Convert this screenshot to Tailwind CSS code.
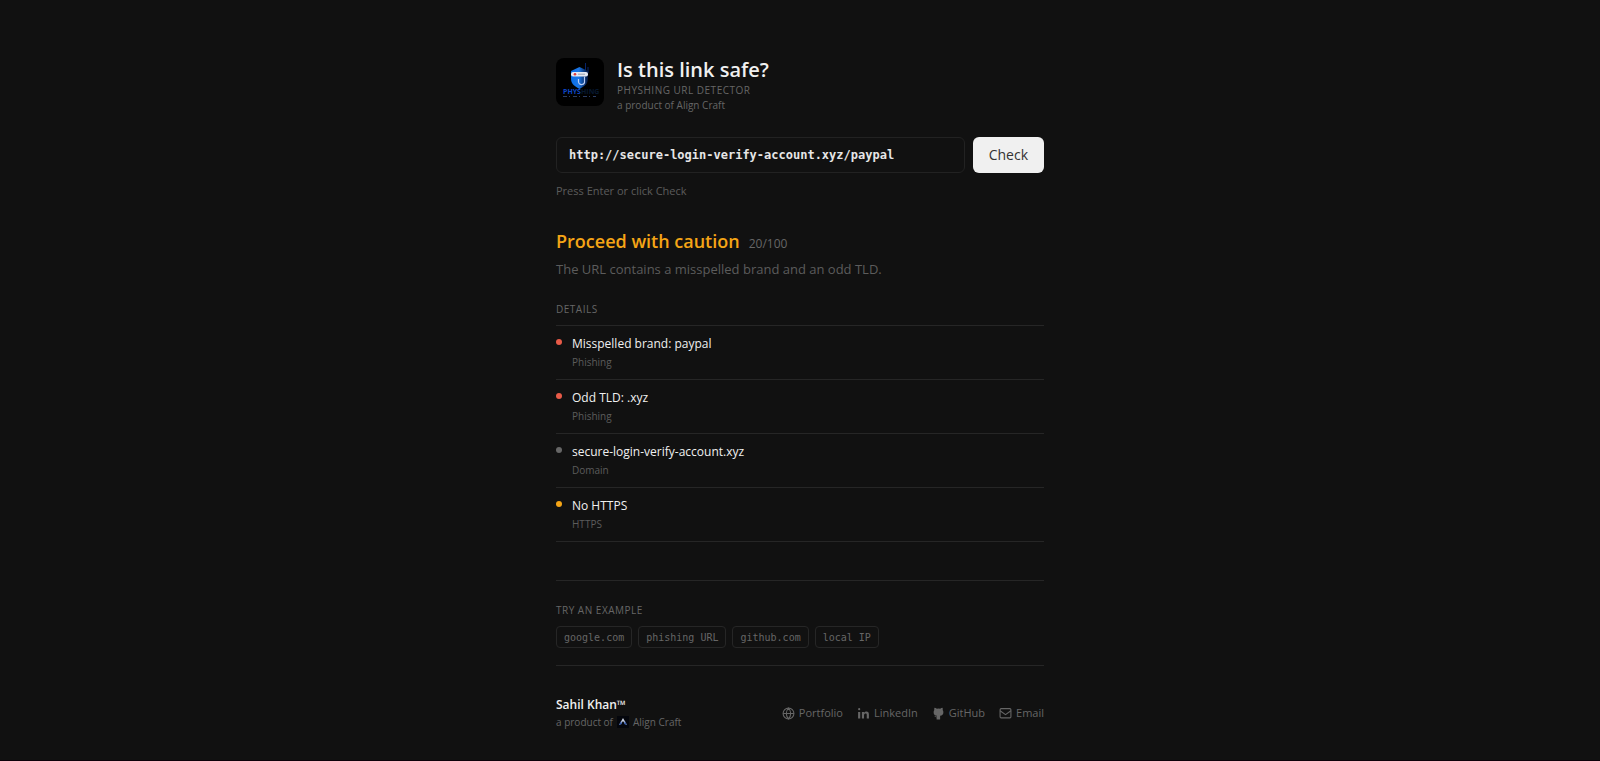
<!DOCTYPE html>
<html lang="en">
<head>
<meta charset="utf-8">
<meta name="viewport" content="width=device-width, initial-scale=1">
<title>Is this link safe?</title>
<script src="https://cdn.jsdelivr.net/npm/@tailwindcss/browser@4"></script>
</head>
<body class="min-h-screen border-b border-[#0c0009] bg-[#111111] font-['Open_Sans',sans-serif] text-[#666666]">
<main class="mx-auto max-w-[520px] px-4 pt-[58px]">
  <header class="flex items-start gap-[13px]">
    <svg class="size-12 shrink-0 rounded-lg" viewBox="0 0 48 48" role="img" aria-label="Physhing logo">
      <defs><linearGradient id="shield" x1="0" x2="1"><stop offset="0" stop-color="#0a6ee8"/><stop offset=".45" stop-color="#1b76e5"/><stop offset="1" stop-color="#041338"/></linearGradient></defs>
      <rect width="48" height="48" fill="#000"/>
      <path d="M23.500 9l8.500 4v8c0 5-4 7.500-8.500 10-4.500-2.500-8.500-5-8.500-10v-8z" fill="url(#shield)"/>
      <path d="M29.500 5v7M32 9v6" stroke="#06246a" stroke-width="1"/>
      <rect x="15" y="14" width="17" height="4.500" rx="2" fill="#e4e8f2"/>
      <circle cx="19" cy="16.200" r="1.300" fill="#e23b3b"/>
      <path d="M22 16.200h7" stroke="#9aa0ae"/>
      <path d="M28.500 18.500v4.500a3 3 0 0 1-6 1v-3" fill="none" stroke="#b9cdf5" stroke-width="1.200"/>
      <text x="7" y="36" font-family="Open Sans" font-size="7" font-weight="700" fill="#0b45c4">PHYS<tspan fill="#06182f">HING</tspan></text>
      <path d="M7 38.500h33" stroke="#2b3e66" stroke-dasharray="4 2 1 3"/>
    </svg>
    <div>
      <h1 class="text-[20px] leading-6 font-semibold text-[#f0f0f0]">Is this link safe?</h1>
      <p class="text-[10px] leading-4 tracking-wider">PHYSHING URL DETECTOR</p>
      <p class="text-[10px] leading-[14px]">a product of Align Craft</p>
    </div>
  </header>

  <form class="mt-[25px]" onsubmit="return false">
    <div class="flex gap-2">
      <input type="text" aria-label="URL to check" value="http://secure-login-verify-account.xyz/paypal" class="h-9 min-w-0 flex-1 rounded-md border border-[#222222] bg-[#111111] px-3 font-['DejaVu_Sans_Mono',monospace] text-[12px] font-bold text-[#e6e6e6] outline-none">
      <button type="submit" class="h-9 rounded-md bg-[#f0f0f0] px-4 pb-0.5 text-[14px] text-[#333333]">Check</button>
    </div>
    <p class="mt-[10px] text-[11px] leading-4 text-[#5c5c5c]">Press Enter or click Check</p>
  </form>

  <section class="mt-7">
    <div class="flex items-baseline gap-[9px]">
      <h2 class="text-[18px] leading-7 font-semibold text-[#f5a516]">Proceed with caution</h2>
      <span class="text-[12px] text-[#666666]">20/100</span>
    </div>
    <p class="mt-1 text-[13px] leading-5 text-[#5c5c5c]">The URL contains a misspelled brand and an odd TLD.</p>
    <h3 class="mt-[22px] text-[10px] leading-4 tracking-wider">DETAILS</h3>
    <ul class="mt-2 border-t border-[#262626]">
      <li class="flex h-[54px] gap-[10px] border-b border-[#262626] pt-2">
        <span class="mt-[5px] size-[6px] shrink-0 rounded-full bg-[#e85b48]"></span>
        <div><p class="text-[12px] leading-5 font-medium text-[#f0f0f0]">Misspelled brand: paypal</p><p class="text-[10px] leading-4 text-[#5c5c5c]">Phishing</p></div>
      </li>
      <li class="flex h-[54px] gap-[10px] border-b border-[#262626] pt-2">
        <span class="mt-[5px] size-[6px] shrink-0 rounded-full bg-[#e85b48]"></span>
        <div><p class="text-[12px] leading-5 font-medium text-[#f0f0f0]">Odd TLD: .xyz</p><p class="text-[10px] leading-4 text-[#5c5c5c]">Phishing</p></div>
      </li>
      <li class="flex h-[54px] gap-[10px] border-b border-[#262626] pt-2">
        <span class="mt-[5px] size-[6px] shrink-0 rounded-full bg-[#666666]"></span>
        <div><p class="text-[12px] leading-5 font-medium text-[#f0f0f0]">secure-login-verify-account.xyz</p><p class="text-[10px] leading-4 text-[#5c5c5c]">Domain</p></div>
      </li>
      <li class="flex h-[54px] gap-[10px] border-b border-[#262626] pt-2">
        <span class="mt-[5px] size-[6px] shrink-0 rounded-full bg-[#f5a516]"></span>
        <div><p class="text-[12px] leading-5 font-medium text-[#f0f0f0]">No HTTPS</p><p class="text-[10px] leading-4 text-[#5c5c5c]">HTTPS</p></div>
      </li>
    </ul>
  </section>

  <section class="mt-[38px] border-y border-[#262626] pt-[21px] pb-[17px]">
    <h3 class="text-[10px] leading-4 tracking-wider">TRY AN EXAMPLE</h3>
    <div class="mt-2 flex gap-[6px] font-['DejaVu_Sans_Mono',monospace] text-[10px]">
      <button type="button" class="h-[22px] rounded border border-[#262626] px-[7px]">google.com</button>
      <button type="button" class="h-[22px] rounded border border-[#262626] px-[7px]">phishing URL</button>
      <button type="button" class="h-[22px] rounded border border-[#262626] px-[7px]">github.com</button>
      <button type="button" class="h-[22px] rounded border border-[#262626] px-[7px]">local IP</button>
    </div>
  </section>

  <footer class="flex items-center justify-between pt-[30px] pb-7">
    <div>
      <p class="text-[12px] leading-[18px] font-semibold text-[#f0f0f0]">Sahil Khan™</p>
      <p class="flex items-center gap-1 text-[10px] leading-4">a product of
        <svg class="size-3" viewBox="0 0 12 12" aria-hidden="true"><rect width="12" height="12" fill="#04060c"/><path d="M6 2l4 7-2-1-2-3-2 3-2 1z" fill="#c9d0e0"/><path d="M2 9l2-4 1 3zM7 8l3 1-2-4z" fill="#3459a8"/></svg>
        Align Craft</p>
    </div>
    <nav aria-label="Links" class="flex gap-[14px] text-[11px] leading-4">
      <a href="#" class="flex items-center gap-1"><svg class="size-[13px]" viewBox="0 0 24 24" fill="none" stroke="currentColor" stroke-width="2" aria-hidden="true"><circle cx="12" cy="12" r="10"/><path d="M2 12h20M12 2c3 3 4 6 4 10s-1 7-4 10c-3-3-4-6-4-10s1-7 4-10z"/></svg>Portfolio</a>
      <a href="#" class="flex items-center gap-1"><svg class="size-[13px]" viewBox="0 0 24 24" fill="currentColor" aria-hidden="true"><circle cx="4" cy="4" r="2"/><path d="M2 9h4v12H2zM9 9h4v1.600C14 9.300 15.500 8.500 17.300 8.500c3.500 0 4.700 2.200 4.700 5.500v7h-4v-6.500c0-1.700-.7-2.500-2.200-2.500S13 13 13 15v6H9z"/></svg>LinkedIn</a>
      <a href="#" class="flex items-center gap-1"><svg class="size-[13px]" viewBox="0 0 24 24" fill="currentColor" aria-hidden="true"><path d="M8.500 23v-4l-2.500-.5-2-2.500 1.500.5 1.500 1h2v-1.500C5 15.500 3 13.500 3 9.500c0-1.500.4-2.800 1.300-3.900C3.900 4.200 4 2.700 4.500 1.200c1.600 0 3.100.8 4.400 1.800a14 14 0 0 1 6.200 0c1.300-1 2.800-1.800 4.400-1.800.5 1.500.6 3 .2 4.400.9 1.100 1.300 2.400 1.300 3.900 0 4-2 6-6 6.500v7z"/></svg>GitHub</a>
      <a href="#" class="flex items-center gap-1"><svg class="size-[13px]" viewBox="0 0 24 24" fill="none" stroke="currentColor" stroke-width="2" aria-hidden="true"><rect x="2" y="3" width="20" height="17" rx="2"/><path d="M2 7l10 7 10-7"/></svg>Email</a>
    </nav>
  </footer>
</main>
</body>
</html>
